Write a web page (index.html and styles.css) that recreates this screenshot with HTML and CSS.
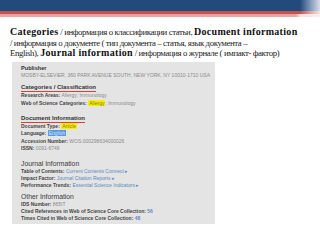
FILE: index.html
```html
<!DOCTYPE html>
<html>
<head>
<meta charset="utf-8">
<link rel="stylesheet" href="styles.css">
</head>
<body>
<div class="topbar">
  <div class="blue"></div>
  <div class="red"></div>
  <div class="pink"></div>
</div>
<p class="intro"><b>Categories</b> / информация о классификации статьи, <b>Document information</b><br>/ информация о документе ( тип документа – статья, язык документа –<br>English), <b>Journal information</b> / информация о журнале ( импакт- фактор)</p>
<div class="panel">
  <div class="sec first">
    <div class="h pub">Publisher</div>
    <div class="ln val">MOSBY-ELSEVIER, 360 PARK AVENUE SOUTH, NEW YORK, NY 10010-1710 USA</div>
  </div>
  <div class="sec">
    <div class="h ul">Categories / Classification</div>
    <div class="ln"><span class="lb">Research Areas:</span> <span class="val">Allergy; Immunology</span></div>
    <div class="ln"><span class="lb">Web of Science Categories:</span> <span class="val"><span class="hy">Allergy</span>; Immunology</span></div>
  </div>
  <div class="sec doc">
    <div class="h ul">Document Information</div>
    <div class="ln"><span class="lb">Document Type:</span> <span class="hy">Article</span></div>
    <div class="ln"><span class="lb">Language:</span> <span class="hb">English</span></div>
    <div class="ln"><span class="lb">Accession Number:</span> <span class="val">WOS:000298634000026</span></div>
    <div class="ln"><span class="lb">ISSN:</span> <span class="val">0091-6749</span></div>
  </div>
  <div class="sec big">
    <div class="h reg">Journal Information</div>
    <div class="ln"><span class="lb">Table of Contents:</span> <span class="lk">Current Contents Connect ▸</span></div>
    <div class="ln"><span class="lb">Impact Factor:</span> <span class="lk">Journal Citation Reports ▸</span></div>
    <div class="ln"><span class="lb">Performance Trends:</span> <span class="lk">Essential Science Indicators ▸</span></div>
  </div>
  <div class="sec other">
    <div class="h reg">Other Information</div>
    <div class="ln"><span class="lb">IDS Number:</span> <span class="val">865IT</span></div>
    <div class="ln"><span class="lb">Cited References in Web of Science Core Collection:</span> <span class="lk b">56</span></div>
    <div class="ln"><span class="lb">Times Cited in Web of Science Core Collection:</span> <span class="lk b">48</span></div>
  </div>
</div>
</body>
</html>
```
FILE: styles.css
```css
html, body {
  margin: 0;
  padding: 0;
  background: #ffffff;
  width: 320px;
  height: 240px;
  overflow: hidden;
}
.topbar {
  height: 17px;
  display: flex;
  flex-direction: column;
}
.blue {
  height: 11px;
  background: linear-gradient(to right, #234a7c 0, #234a7c 300px, #8fa4c2 312px, #d8dee8 320px);
}
.red {
  height: 3px;
  background: linear-gradient(to right, #c4514e 0, #c4514e 300px, #e6b0ae 312px, #f6e4e4 320px);
}
.pink {
  height: 3px;
  background: linear-gradient(to right, #e9a4a2 0, #e9a4a2 296px, #f7dede 300px, #fbeeee 320px);
}
.intro {
  margin: 10px 0 0 10px;
  height: 32px;
  white-space: nowrap;
  font-family: "Liberation Serif", "DejaVu Serif", serif;
  font-size: 8.8px;
  letter-spacing: -0.4px;
  line-height: 10.5px;
  color: #222;
}
.intro b {
  font-size: 10px;
  letter-spacing: 0.3px;
  color: #111;
}
.panel {
  margin: 3px 0 0 12px;
  width: 203px;
  height: 162px;
  box-sizing: border-box;
  padding: 2.5px 0 0 9px;
  background: #e4e4e4;
  font-family: "Liberation Sans", Arial, sans-serif;
  font-size: 5px;
  line-height: 7px;
  color: #333;
  overflow: hidden;
}
.sec {
  margin-top: 5.5px;
}
.sec.first {
  margin-top: 0;
}
.sec.doc {
  margin-top: 7.5px;
}
.sec.big {
  margin-top: 7.5px;
}
.sec.other {
  margin-top: 3.8px;
}
.h {
  font-size: 6px;
  line-height: 7px;
  font-weight: bold;
  color: #333;
}
.h.pub {
  font-size: 5.6px;
}
.h.ul {
  width: fit-content;
  border-bottom: 1px solid #e03a3a;
  line-height: 7px;
}
.h.reg {
  font-weight: normal;
  font-size: 6.8px;
  line-height: 8px;
  color: #3a3a3a;
}
.ln {
  font-size: 5px;
  line-height: 7.4px;
  white-space: nowrap;
}
.sec.big .ln {
  line-height: 7px;
}
.lb {
  font-weight: bold;
  color: #444;
}
.val {
  color: #8a8a8a;
}
.lk {
  color: #5a8ac0;
}
.lk.b {
  font-weight: bold;
}
.hy {
  background: #f4f000;
  color: #8a7a30;
  padding: 0 1px;
}
.hb {
  background: #5a9ae0;
  color: #cfe2f6;
  padding: 0 1px;
}
```
